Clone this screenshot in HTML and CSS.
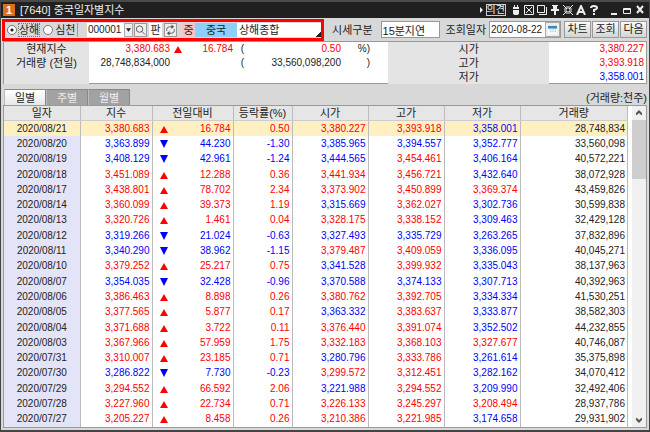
FILE: index.html
```html
<!DOCTYPE html>
<html lang="ko">
<head>
    <meta charset="UTF-8">
    <meta name="viewport" content="width=device-width, initial-scale=1.0">
    <title>중국일자별지수</title>
    <link rel="stylesheet" href="styles.css">
</head>
<body>

<div class="window">
    <!-- 제목 표시줄 -->
    <header class="titlebar">
        <span class="screen-badge">1</span>
        <h1>[7640] 중국일자별지수</h1>
        <div class="window-tools">
            <svg class="tool-arrow" viewBox="0 0 3 6" aria-hidden="true"><path d="M0 0L3 3L0 6Z"/></svg>
            <button class="opinion">의견</button>
            <button class="tool" aria-label="마우스"><svg viewBox="0 0 10 10"><path class="solid" d="M3 0H4V2H6V0H7V2H8V4H2V2H3ZM2 5H8V8Q8 10 5 10Q2 10 2 8Z"/></svg></button>
            <button class="tool" aria-label="화면 맞춤"><svg viewBox="0 0 10 10"><path d="M.5 .5H9.5V9.5H.5ZM2 2L8 8M8 2L2 8"/></svg></button>
            <button class="tool" aria-label="화면 복사"><svg viewBox="0 0 10 10"><path d="M.5 .5H7.5V7.5H.5ZM9.5 2V9.5H2"/></svg></button>
            <button class="tool" aria-label="고정"><svg viewBox="0 0 10 10"><path class="solid" d="M2 0H8V1H7V4H9V6H6V10H4V6H1V4H3V1H2Z"/></svg></button>
            <button class="tool" aria-label="축소"><svg viewBox="0 0 10 10"><path d="M0 0L4 4M10 0L6 4M0 10L4 6M10 10L6 6M4 1V4H1M6 1V4H9M4 9V6H1M6 9V6H9"/></svg></button>
            <button class="tool" aria-label="글꼴"><svg viewBox="0 0 10 10"><path class="bold" d="M1 10L5 1L9 10M3 7H7"/></svg></button>
            <button class="tool" aria-label="도움말"><svg viewBox="0 0 10 10"><path class="bold" d="M2 3Q2 1 5 1Q8 1 8 3Q8 4 5 5V7M5 8V10"/></svg></button>
            <button class="tool win" aria-label="최소화"><svg viewBox="0 0 10 10"><path class="bold" d="M2 9H8"/></svg></button>
            <button class="tool" aria-label="최대화"><svg viewBox="0 0 10 10"><path d="M1.5 3.5H8.5V8.5H1.5ZM1 4.5H9"/></svg></button>
            <button class="tool" aria-label="닫기"><svg viewBox="0 0 10 10"><path class="bold" d="M2 1L8 8M8 1L2 8"/></svg></button>
        </div>
    </header>

    <!-- 조회 조건 -->
    <form class="toolbar">
        <div class="market-box">
            <div class="market-radios">
                <label class="selected"><input type="radio" name="market" checked><span>상해</span></label>
                <label><input type="radio" name="market"><span>심천</span></label>
            </div>
            <div class="code-field">
                <input type="text" value="000001" aria-label="지수 코드">
                <button type="button" class="drop" aria-label="코드 목록"><svg viewBox="0 0 6 4"><path class="solid" d="M0 0H6L3 4Z"/></svg></button>
            </div>
            <button type="button" class="mini" aria-label="검색"><svg viewBox="0 0 12 12"><circle cx="5" cy="5" r="3.5"/><path d="M7.5 7.5L11 11"/></svg></button>
            <button type="button" class="mini plain">판</button>
            <button type="button" class="mini" aria-label="새로고침"><svg viewBox="0 0 12 12"><path d="M2 7Q1 3 5 2.5H8M10 5Q11 9 7 9.5H4"/><path class="solid" d="M7 0L10 2.5L7 5ZM5 7L2 9.5L5 12Z"/></svg></button>
            <span class="nation-mark">중</span>
            <span class="nation">중국</span>
            <button type="button" class="index-name">상해종합</button>
        </div>
        <div class="query">
            <label for="quoteType">시세구분</label>
            <input type="text" id="quoteType" class="quote-type" value="15분지연" readonly>
            <label for="queryDate">조회일자</label>
            <div class="date-field">
                <input type="text" id="queryDate" value="2020-08-22">
                <button type="button" aria-label="달력"><svg viewBox="0 0 10 10"><path class="paper" d="M0 1H10V10H0Z"/><path class="cal-head" d="M0 1H10V4H0Z"/><path class="dots" d="M2 5.5H9M2 7.5H9"/></svg></button>
            </div>
            <div class="actions">
                <button type="button">차트</button>
                <button type="button">조회</button>
                <button type="button">다음</button>
            </div>
        </div>
    </form>

    <!-- 현재지수 요약 -->
    <section class="summary">
        <div class="summary-head">
            <span>현재지수</span>
            <span>거래량 (전일)</span>
        </div>
        <div class="summary-body">
            <span class="up">3,380.683</span>
            <svg class="mark" viewBox="0 0 8 8"><path class="up-mark" d="M4 1L8 8H0Z"/></svg>
            <span class="up">16.784</span>
            <span class="paren">(</span>
            <span class="up">0.50</span>
            <span>%)</span>
            <span class="volume">28,748,834,000</span>
            <span class="paren prev">(</span>
            <span>33,560,098,200</span>
            <span>)</span>
        </div>
        <div class="summary-head">
            <span>시가</span>
            <span>고가</span>
            <span>저가</span>
        </div>
        <div class="summary-prices">
            <span class="up">3,380.227</span>
            <span class="up">3,393.918</span>
            <span class="down">3,358.001</span>
        </div>
    </section>

    <!-- 기간 탭 -->
    <nav class="tabs">
        <button class="tab active">일별</button>
        <button class="tab">주별</button>
        <button class="tab">월별</button>
        <span class="unit">(거래량:천주)</span>
    </nav>

    <!-- 일자별 시세 -->
    <div class="grid">
        <table>
            <colgroup>
                <col class="col-date"><col class="col-index"><col class="col-change"><col class="col-rate">
                <col class="col-price"><col class="col-price"><col class="col-price"><col class="col-volume">
            </colgroup>
            <thead>
                <tr><th>일자</th><th>지수</th><th>전일대비</th><th>등락률(%)</th><th>시가</th><th>고가</th><th>저가</th><th>거래량</th></tr>
            </thead>
            <tbody id="rows"></tbody>
        </table>
        <div class="scrollbar">
            <button aria-label="위로"><svg viewBox="0 0 6 6"><path d="M0 4.5L3 1.5L6 4.5"/></svg></button>
            <div class="thumb"></div>
            <button class="scroll-down" aria-label="아래로"><svg viewBox="0 0 6 6"><path d="M0 1.5L3 4.5L6 1.5"/></svg></button>
        </div>
    </div>
</div>

<script src="script.js"></script>
</body>
</html>
```
FILE: styles.css
```css
* {
    box-sizing: border-box;
}
body {
    margin: 0;
    font-family: "Liberation Sans", "Noto Sans CJK KR", sans-serif;
    font-size: 11px;
    line-height: 14px;
    color: #222;
}
button, input {
    font: inherit;
    color: inherit;
    margin: 0;
    padding: 0;
    border: 0;
    border-radius: 0;
    background: none;
}
svg {
    display: block;
    fill: none;
    stroke: currentColor;
}
.solid {
    fill: currentColor;
    stroke: none;
}
.bold {
    stroke-width: 2;
}
.window {
    display: flex;
    flex-direction: column;
    height: 100vh;
    padding: 0 2px 2px;
    border: solid #444;
    border-width: 0 1px 2px;
    background: #d8d8d8;
}

/* 제목 표시줄 */
.titlebar {
    display: flex;
    align-items: center;
    height: 18px;
    margin: 0 -2px;
    padding: 0 4px 0 2px;
    border-top: 2px solid #4a4a4a;
    background: #202020;
    color: #eee;
}
.screen-badge {
    width: 12px;
    height: 12px;
    line-height: 12px;
    text-align: center;
    font-weight: bold;
    background: #d8701c;
    color: #fff;
}
h1 {
    margin: 0 0 0 5px;
    font-size: 11px;
    font-weight: normal;
}
.window-tools {
    display: flex;
    align-items: center;
    gap: 3px;
    margin-left: auto;
}
.tool-arrow {
    width: 3px;
    height: 6px;
    fill: #eee;
    stroke: none;
}
.opinion {
    height: 12px;
    margin-right: 2px;
    font-size: 10px;
    line-height: 10px;
    border: 1px solid #ccc;
}
.tool svg {
    width: 10px;
    height: 10px;
}
.win {
    margin-left: 7px;
}

/* 조회 조건 */
.toolbar {
    display: flex;
    align-items: center;
    height: 23px;
    margin-left: -1px;
}
.market-box {
    display: flex;
    align-items: center;
    width: 322px;
    height: 22px;
    border: 3px solid #f00;
}
.market-radios {
    display: flex;
    gap: 4px;
    width: 73px;
    margin-right: 9px;
    padding-left: 2px;
    border-right: 1px solid #999;
}
.market-radios label {
    display: flex;
    align-items: center;
    gap: 2px;
}
.market-radios input {
    appearance: none;
    width: 10px;
    height: 10px;
    border: 1px solid #777;
    border-radius: 50%;
    background: #fff;
}
.market-radios input:checked {
    background: radial-gradient(#222 1px, #fff 2px);
}
.selected span {
    line-height: 12px;
    outline: 1px dotted #777;
}
.code-field {
    display: flex;
    width: 46px;
    height: 14px;
    margin-right: 1px;
    background: #fff;
}
.code-field input {
    flex: 1;
    min-width: 0;
    padding-left: 1px;
    font-size: 10px;
}
.drop {
    width: 9px;
    border: 1px solid #aaa;
    background: #eee;
}
.drop svg {
    width: 5px;
    height: 4px;
    margin: auto;
}
.mini {
    width: 13px;
    height: 14px;
    margin-right: 2px;
    border: 1px solid #999;
    background: #eee;
}
.mini svg {
    width: 11px;
    height: 12px;
    color: #555;
}
.plain {
    line-height: 12px;
    border: 0;
    background: #fff;
}
.nation-mark, .nation {
    height: 14px;
    line-height: 14px;
    text-align: center;
    background: #f8c4c4;
}
.nation-mark {
    width: 13px;
    margin-left: 3px;
}
.nation {
    width: 42px;
    background: #8cd0fa;
}
.index-name {
    flex: 1;
    height: 14px;
    padding-left: 2px;
    text-align: left;
    background: linear-gradient(135deg, transparent 50%, #222 50%) right bottom / 5px 5px no-repeat #fff;
}
.query {
    display: flex;
    flex: 1;
    align-items: center;
    justify-content: flex-end;
    gap: 3px;
}
.quote-type, .date-field {
    height: 17px;
    border: 1px solid #999;
    background: #fff;
}
.quote-type {
    width: 59px;
    margin: 0 3px 0 5px;
    padding-left: 1px;
}
.date-field {
    display: flex;
    align-items: center;
    width: 72px;
}
.date-field input {
    flex: 1;
    min-width: 0;
    padding-left: 1px;
    font-size: 10px;
}
.date-field button {
    padding: 2px;
    border: 1px solid #aaa;
    background: #eee;
}
.date-field svg {
    width: 9px;
    height: 9px;
    stroke: none;
}
.paper {
    fill: #fff;
}
.cal-head {
    fill: #3c88b8;
}
.dots {
    stroke: #999;
    stroke-dasharray: 1 1;
}
.actions {
    display: flex;
    gap: 1px;
}
.actions button {
    width: 27px;
    height: 17px;
    line-height: 15px;
    border: 1px solid #999;
    background: linear-gradient(#fafafa, #d4d4d4);
}

/* 현재지수 요약 */
.summary {
    display: grid;
    grid-template-columns: 85px 300fr 161fr 97px;
    height: 43px;
    border: 1px solid #999;
    background: #fff;
}
.summary-head {
    display: flex;
    flex-direction: column;
    align-items: center;
    background: #e4e4e4;
}
.summary-body {
    display: grid;
    grid-template-columns: 81px 12px 51px 11px 97px 29px;
    grid-template-rows: 14px 14px;
    text-align: right;
    font-size: 10px;
}
.mark {
    width: 8px;
    height: 8px;
    margin: 3px 0 0 4px;
    stroke: none;
}
.volume {
    grid-column: 1;
}
.prev {
    grid-column: 4;
}
.summary-prices {
    display: flex;
    flex-direction: column;
    padding-right: 2px;
    text-align: right;
    font-size: 10px;
}
.up {
    color: #f00;
}
.down {
    color: #00f;
}
.up-mark {
    fill: #f00;
}
.down-mark {
    fill: #00f;
}

/* 기간 탭 */
.tabs {
    display: flex;
    align-items: flex-end;
    height: 21px;
    padding-left: 1px;
}
.tab {
    width: 42px;
    height: 16px;
    line-height: 14px;
    border: 1px solid #888;
    border-bottom: 0;
    border-left-color: #bbb;
    background: #a2a2a2;
    color: #eee;
}
.active {
    background: linear-gradient(#fff, #e8e8e8);
    color: #222;
}
.unit {
    margin-left: auto;
}

/* 일자별 시세 */
.grid {
    display: flex;
    flex: 1;
    min-height: 0;
    gap: 4px;
    border: 1px solid #999;
    background: #fff;
}
table {
    flex: 1;
    height: 100%;
    table-layout: fixed;
    border-collapse: collapse;
}
.col-date { width: 76px; }
.col-index { width: 72px; }
.col-change { width: 81px; }
.col-rate { width: 59px; }
.col-price { width: 76px; }
.col-volume { width: auto; }
th, td {
    padding: 0 2px;
    line-height: 14px;
    border-right: 1px solid #bbb;
    text-align: right;
}
th {
    font-weight: normal;
    text-align: center;
    border-bottom: 1px solid #ccc;
    background: #e6e6e6;
}
td {
    font-size: 10px;
}
td.date {
    text-align: center;
    background: #e4e4f8;
}
.today td, .today td.date {
    background: #fff0c4;
}
.change {
    display: flex;
    align-items: center;
    justify-content: space-between;
    padding-left: 5px;
}
.change svg {
    width: 8px;
    height: 8px;
    stroke: none;
}
.scrollbar {
    display: flex;
    flex-direction: column;
    width: 14px;
    background: #f0f0f0;
}
.scrollbar button {
    display: flex;
    align-items: center;
    justify-content: center;
    height: 14px;
    color: #555;
}
.scrollbar svg {
    width: 6px;
    height: 6px;
    stroke-width: 2;
}
.thumb {
    height: 59px;
    background: #cdcdcd;
}
.scroll-down {
    margin-top: auto;
}
```
FILE: script.js
```js
// 일자, 지수, 대비, 등락률, 시가, 고가, 저가, 거래량, 시가/고가/저가 색 (u: 상승, d: 하락)
const rows = [
    ['2020/08/21', '3,380.683', '16.784', '0.50', '3,380.227', '3,393.918', '3,358.001', '28,748,834', 'uud'],
    ['2020/08/20', '3,363.899', '44.230', '-1.30', '3,385.965', '3,394.557', '3,352.777', '33,560,098', 'ddd'],
    ['2020/08/19', '3,408.129', '42.961', '-1.24', '3,444.565', '3,454.461', '3,406.164', '40,572,221', 'dud'],
    ['2020/08/18', '3,451.089', '12.288', '0.36', '3,441.934', '3,456.721', '3,432.640', '38,072,928', 'uud'],
    ['2020/08/17', '3,438.801', '78.702', '2.34', '3,373.902', '3,450.899', '3,369.374', '43,459,826', 'uuu'],
    ['2020/08/14', '3,360.099', '39.373', '1.19', '3,315.669', '3,362.027', '3,302.736', '30,599,838', 'dud'],
    ['2020/08/13', '3,320.726', '1.461', '0.04', '3,328.175', '3,338.152', '3,309.463', '32,429,128', 'uud'],
    ['2020/08/12', '3,319.266', '21.024', '-0.63', '3,327.493', '3,335.729', '3,263.265', '37,832,896', 'ddd'],
    ['2020/08/11', '3,340.290', '38.962', '-1.15', '3,379.487', '3,409.059', '3,336.095', '40,045,271', 'uud'],
    ['2020/08/10', '3,379.252', '25.217', '0.75', '3,341.528', '3,399.932', '3,335.043', '38,137,963', 'dud'],
    ['2020/08/07', '3,354.035', '32.428', '-0.96', '3,370.588', '3,374.133', '3,307.713', '40,392,963', 'ddd'],
    ['2020/08/06', '3,386.463', '8.898', '0.26', '3,380.762', '3,392.705', '3,334.334', '41,530,251', 'uud'],
    ['2020/08/05', '3,377.565', '5.877', '0.17', '3,363.332', '3,383.637', '3,333.877', '38,582,303', 'dud'],
    ['2020/08/04', '3,371.688', '3.722', '0.11', '3,376.440', '3,391.074', '3,352.502', '44,232,855', 'uud'],
    ['2020/08/03', '3,367.966', '57.959', '1.75', '3,332.183', '3,368.103', '3,327.677', '40,746,087', 'uuu'],
    ['2020/07/31', '3,310.007', '23.185', '0.71', '3,280.796', '3,333.786', '3,261.614', '35,375,898', 'dud'],
    ['2020/07/30', '3,286.822', '7.730', '-0.23', '3,299.572', '3,312.451', '3,282.162', '34,070,412', 'uud'],
    ['2020/07/29', '3,294.552', '66.592', '2.06', '3,221.988', '3,294.552', '3,209.990', '32,492,406', 'dud'],
    ['2020/07/28', '3,227.960', '22.734', '0.71', '3,226.133', '3,245.297', '3,208.494', '28,937,786', 'uuu'],
    ['2020/07/27', '3,205.227', '8.458', '0.26', '3,210.386', '3,221.985', '3,174.658', '29,931,902', 'uud']
];

const colors = { u: 'up', d: 'down' };
const upMark = '<svg viewBox="0 0 8 8"><path class="up-mark" d="M4 1L8 8H0Z"/></svg>';
const downMark = '<svg viewBox="0 0 8 8"><path class="down-mark" d="M0 0H8L4 8Z"/></svg>';

// 표에 시세 행 추가
document.getElementById('rows').innerHTML = rows.map((row, i) => {
    const [date, index, change, rate, open, high, low, volume, tone] = row;
    const falling = rate.startsWith('-');
    const main = falling ? 'down' : 'up';
    return `<tr class="${i === 0 ? 'today' : ''}">
        <td class="date">${date}</td>
        <td class="${main}">${index}</td>
        <td class="${main}"><div class="change">${falling ? downMark : upMark}${change}</div></td>
        <td class="${main}">${rate}</td>
        <td class="${colors[tone[0]]}">${open}</td>
        <td class="${colors[tone[1]]}">${high}</td>
        <td class="${colors[tone[2]]}">${low}</td>
        <td>${volume}</td>
    </tr>`;
}).join('');
```
